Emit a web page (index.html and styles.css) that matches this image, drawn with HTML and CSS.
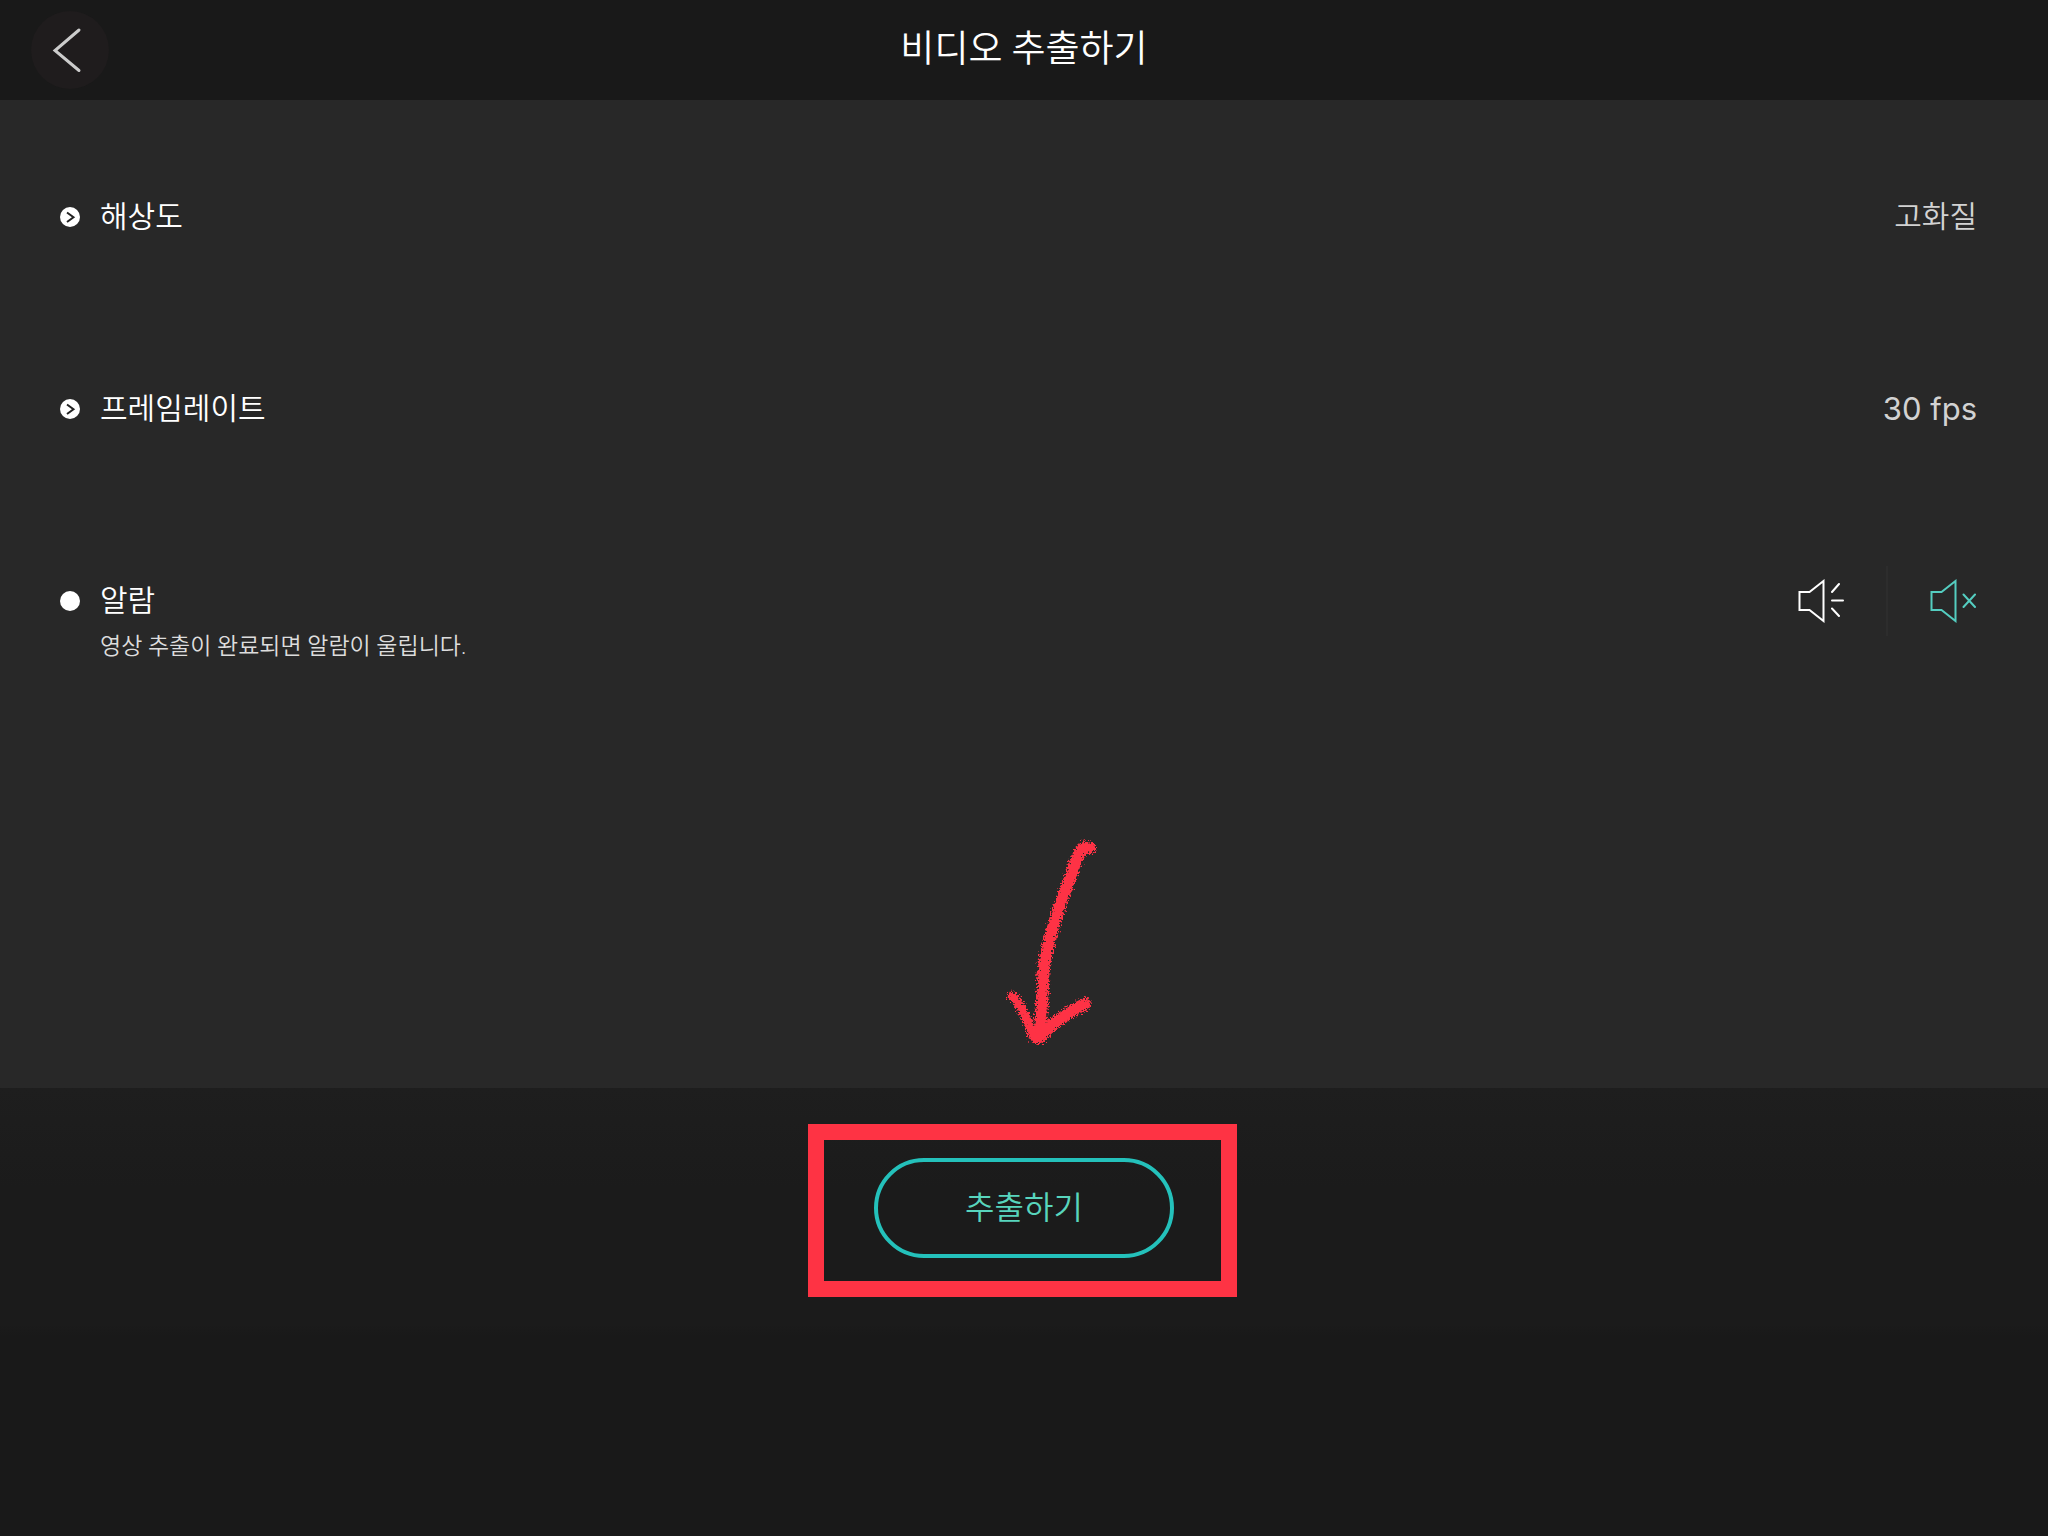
FILE: index.html
```
<!DOCTYPE html>
<html lang="ko">
  <head>
    <meta charset="utf-8">
    <title>비디오 추출하기</title>
    <link rel="stylesheet" href="styles.css">
  </head>
  <body>
    <header>
      <button class="back" aria-label="뒤로">
        <svg width="78" height="78" viewBox="0 0 78 78"><path d="M48 19 L24 39.500 L48 59.500" /></svg>
      </button>
      <h1>비디오 추출하기</h1>
    </header>

    <main>
      <button class="row">
        <svg class="bullet" width="20" height="20" viewBox="0 0 20 20"><circle cx="10" cy="10" r="10" /><path d="M7 5.500 L13.500 10.200 L7 15" /></svg>
        <span class="label">해상도</span>
        <span class="value">고화질</span>
      </button>
      <button class="row">
        <svg class="bullet" width="20" height="20" viewBox="0 0 20 20"><circle cx="10" cy="10" r="10" /><path d="M7 5.500 L13.500 10.200 L7 15" /></svg>
        <span class="label">프레임레이트</span>
        <span class="value fps">30 fps</span>
      </button>
      <div class="row">
        <svg class="bullet" width="20" height="20" viewBox="0 0 20 20"><circle cx="10" cy="10" r="10" /></svg>
        <div class="label">
          알람
          <p class="hint">영상 추출이 완료되면 알람이 울립니다.</p>
        </div>
        <div class="sound">
          <button aria-label="알람 켜기">
            <svg width="48" height="44" viewBox="0 0 48 44"><path d="M2.500 13 H12.500 L26.500 2 V42 L12.500 31 H2.500 Z M35 13 L42 5 M35 21.500 H46 M35 29.500 L42 37" /></svg>
          </button>
          <button class="on" aria-label="알람 끄기">
            <svg width="48" height="44" viewBox="0 0 48 44"><path d="M2.500 13 H12.500 L26.500 2 V42 L12.500 31 H2.500 Z M34.500 15.500 L46 28 M46 15.500 L34.500 28" /></svg>
          </button>
        </div>
      </div>
    </main>

    <footer>
      <div class="export">
        <button>추출하기</button>
        <div class="highlight"></div>
        <svg class="arrow" width="104" height="216" viewBox="0 0 104 216">
          <filter id="crayon" x="-10%" y="-10%" width="120%" height="120%">
            <feTurbulence type="fractalNoise" baseFrequency="0.6" numOctaves="3" seed="4" result="noise" />
            <feDisplacementMap in="SourceGraphic" in2="noise" scale="10" xChannelSelector="R" yChannelSelector="G" />
          </filter>
          <g filter="url(#crayon)">
            <path d="M90 12 C82 8 79 17 74 30 C70 46 64 56 59 72 C50 101 43 122 43 150 C42 170 41 186 39 202" />
            <path class="thin" d="M12 160 C24 171 28 188 34 202" />
            <path d="M85 168 C70 175 55 184 39 202" />
          </g>
        </svg>
      </div>
    </footer>
  </body>
</html>
```

FILE: styles.css
```
* { box-sizing: border-box; }
body { margin: 0; min-height: 100vh; display: flex; flex-direction: column; background: #282828; color: #fff; font-family: Roboto, "Noto Sans CJK KR", sans-serif; }
button { background: none; border: none; padding: 0; color: inherit; font: inherit; cursor: pointer; }
svg { display: block; fill: none; stroke: currentColor; }

header { position: relative; height: 100px; display: flex; align-items: center; justify-content: center; background: #191919; }
h1 { margin: 0; font-size: 37px; line-height: 54px; font-weight: 350; }
.back { position: absolute; left: 31px; top: 11px; border-radius: 50%; background: #1f1c1d; color: #ccc; }
.back svg { stroke-width: 3; stroke-linecap: round; }

main { flex: 1; padding-top: 21px; }
.row { width: 100%; height: 192px; padding: 0 71px 0 60px; display: flex; align-items: center; gap: 20px; font-size: 30px; line-height: 44px; font-weight: 350; text-align: left; }
.label { position: relative; flex: 1; }
.value { color: #d2d2d2; }
.fps { font-family: Inter, sans-serif; font-size: 31px; font-weight: 400; }
.bullet circle { fill: #fff; stroke: none; }
.bullet path { stroke: #222; stroke-width: 2; }
.hint { position: absolute; left: 0; top: 100%; margin: 0; font-size: 23px; line-height: 48px; color: #ddd; white-space: nowrap; }

.sound { display: flex; align-items: center; }
.sound svg { stroke-width: 2; stroke-linecap: round; }
.sound .on { height: 70px; margin-left: 41px; padding-left: 41px; border-left: 2px solid #2d2d2d; color: #54cdc0; }

footer { padding: 70px 0 278px; display: flex; justify-content: center; background: linear-gradient(#1e1e1e, #1b1b1b 100px, #1b1b1b 236px, #191919 248px); }
.export { position: relative; }
.export button { width: 300px; height: 100px; border: 4px solid #24c1bb; border-radius: 50px; font-size: 32px; line-height: 44px; font-weight: 350; color: #58d5bd; }

/* guide marks over the export button */
.highlight { position: absolute; top: -34px; right: -63px; bottom: -39px; left: -66px; border: 16px solid #fe3344; pointer-events: none; }
.arrow { position: absolute; left: 126px; bottom: 206px; color: #fe3344; stroke-width: 12; stroke-linecap: round; pointer-events: none; }
.arrow .thin { stroke-width: 9; }
```
